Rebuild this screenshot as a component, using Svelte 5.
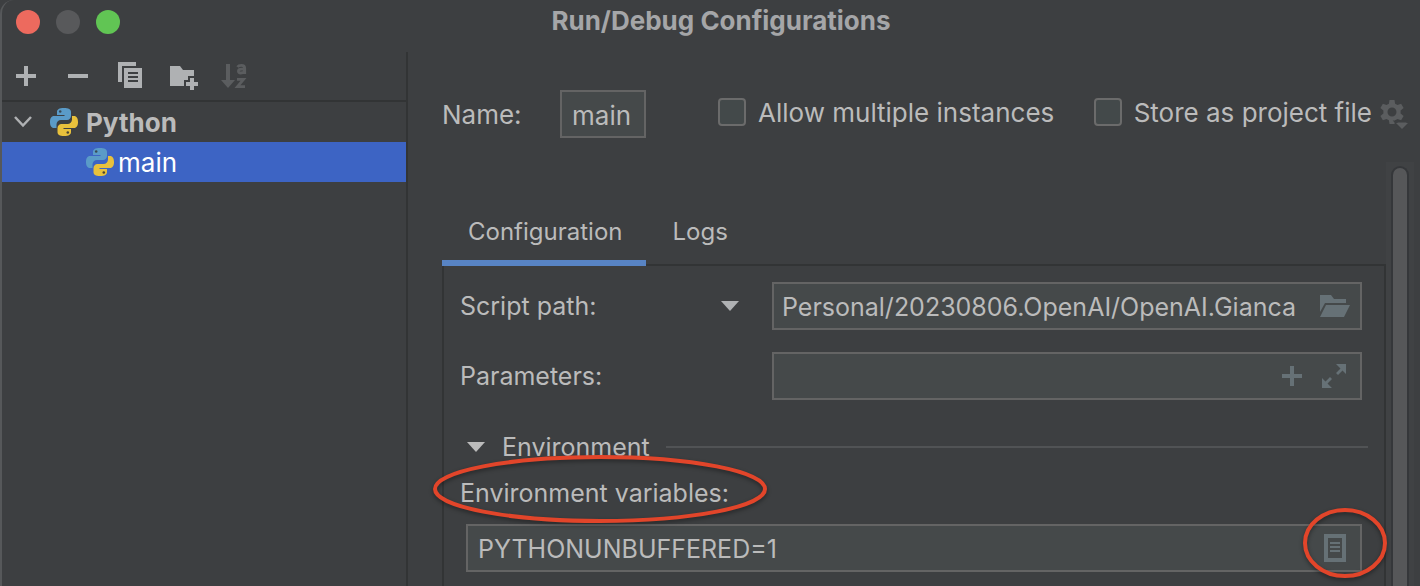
<script>
  let name = $state('main');
  let allowMultiple = $state(false);
  let storeAsFile = $state(false);
  let scriptPath = $state('Personal/20230806.OpenAI/OpenAI.Gianca');
  let parameters = $state('');
  let variables = $state('PYTHONUNBUFFERED=1');
</script>

{#snippet python()}
  <svg class="python" viewBox="0 0 28 28" width="28" height="28" aria-hidden="true">
    <path fill="#5a9bc8" d="M14 0C9 0 7 1.500 7 4v3h7.500v1H4C1.300 8 0 10.500 0 14s1.300 6 4 6h2.500v-3.500c0-2.500 2-4.500 4.500-4.500h6c2.200 0 4-1.800 4-4V4c0-2.700-2.500-4-7-4z" />
    <path fill="#e8c13c" d="M14 28c5 0 7-1.500 7-4v-3h-7.500v-1H24c2.700 0 4-2.500 4-6s-1.300-6-4-6h-2v3.500c0 2.500-2 4.500-4.500 4.500h-6c-2.200 0-4 1.800-4 4v4c0 2.700 2 4 6.500 4z" />
    <circle cx="10.200" cy="3.500" r="1.300" fill="#3a4a55" />
    <circle cx="17.800" cy="24.500" r="1.300" fill="#4a4635" />
  </svg>
{/snippet}

<div class="window">
  <header>
    <div class="lights">
      <button class="light close" aria-label="Close"></button>
      <button class="light" aria-label="Minimize" disabled></button>
      <button class="light zoom" aria-label="Zoom"></button>
    </div>
    <h1>Run/Debug Configurations</h1>
  </header>

  <div class="body">
    <aside>
      <div class="toolbar">
        <button aria-label="Add">
          <svg viewBox="0 0 28 28" width="28" height="28"><path d="M4 12h8V4h4v8h8v4h-8v8h-4v-8H4z" /></svg>
        </button>
        <button aria-label="Remove">
          <svg viewBox="0 0 28 28" width="28" height="28"><path d="M4 12h20v4H4z" /></svg>
        </button>
        <button aria-label="Copy">
          <svg viewBox="0 0 28 28" width="28" height="28">
            <path d="M2 0h18v4H6v16H2z" />
            <path fill-rule="evenodd" d="M8 6h18v20H8zM12 10v2h10v-2zM12 14v2h10v-2zM12 18v2h10v-2z" />
          </svg>
        </button>
        <button aria-label="New folder">
          <svg viewBox="0 0 28 28" width="28" height="28">
            <path d="M2 4h10l3 4h11v6h-6v4h-4v6H2z" />
            <path d="M22 16h4v4h4v4h-4v4h-4v-4h-4v-4h4z" />
          </svg>
        </button>
        <button aria-label="Sort alphabetically" disabled>
          <svg viewBox="0 0 28 28" width="28" height="28">
            <path d="M6 2h4v16h5l-7 8-7-8h5z" />
            <g fill="none" stroke="currentColor" stroke-width="2.800">
              <path d="M17.500 5c1-1.500 2.500-1.700 4-1.700 2 0 3.200.8 3.200 3V12M25 7.200h-3.500c-4 0-4 3.800-.8 3.800 2.300 0 4-1 4-3" />
              <path d="M17 17.400h6.500l-6 7.200h7.500" />
            </g>
          </svg>
        </button>
      </div>
      <ul class="tree">
        <li class="group">
          <svg class="chevron" viewBox="0 0 18 12" width="18" height="12" aria-hidden="true"><path d="M1 1l8 8.500L17 1" /></svg>
          {@render python()}
          <span>Python</span>
        </li>
        <li class="leaf selected">
          {@render python()}
          <span>main</span>
        </li>
      </ul>
    </aside>

    <main>
      <div class="name-row">
        <label class="name-label" for="name">Name:</label>
        <input class="field name" id="name" bind:value={name} />
        <label class="check multiple"><input type="checkbox" bind:checked={allowMultiple} /><span>Allow multiple instances</span></label>
        <label class="check"><input type="checkbox" bind:checked={storeAsFile} /><span>Store as project file</span></label>
        <button class="gear" aria-label="Storage options" disabled>
          <svg viewBox="0 0 28 30" width="28" height="30">
            <path fill-rule="evenodd" d="M9.500 1h5l.6 3.800 2.400 1.300 3.600-1.400 2.500 4.300-3 2.500v3l3 2.500-2.500 4.300-3.600-1.400-2.400 1.300-.6 3.800h-5l-.6-3.800-2.400-1.300-3.600 1.400L.4 17l3-2.500v-3L.4 9l2.500-4.300 3.600 1.400 2.400-1.300zM12 8.500a4.500 4.500 0 1 0 0 9 4.500 4.500 0 0 0 0-9z" />
            <path d="M15 22.500h14l-7 7.500z" stroke="#3d3f41" stroke-width="2" />
            <path d="M16 24h12l-6 6z" />
          </svg>
        </button>
      </div>

      <div class="scroll">
        <div class="content">
          <div class="tabs" role="tablist">
            <button role="tab" aria-selected="true">Configuration</button>
            <button role="tab" aria-selected="false">Logs</button>
          </div>
          <section class="panel">
            <div class="form-row">
              <label for="script">Script path:</label>
              <button class="drop" aria-label="Choose target type">
                <svg viewBox="0 0 18 10" width="18" height="10"><path d="M0 0h18l-9 10z" /></svg>
              </button>
              <div class="field">
                <input id="script" bind:value={scriptPath} />
                <button aria-label="Browse">
                  <svg viewBox="0 0 30 22" width="30" height="22">
                    <path d="M0 0h11l3 4h12v4H5L0 17z" />
                    <path d="M6 10h24l-6 12H0z" />
                  </svg>
                </button>
              </div>
            </div>
            <div class="form-row">
              <label for="params">Parameters:</label>
              <div class="field params">
                <input id="params" bind:value={parameters} />
                <button aria-label="Insert macro">
                  <svg viewBox="0 0 20 20" width="20" height="20"><path d="M0 8h8V0h4v8h8v4h-8v8H8v-8H0z" /></svg>
                </button>
                <button aria-label="Expand">
                  <svg viewBox="0 0 24 24" width="24" height="24">
                    <path d="M14 0h10v10l-3.500-3.500-4.500 4.500-2-2 4.500-4.500z" />
                    <path d="M10 24H0V14l3.500 3.500L8 13l2 2-4.500 4.500z" />
                  </svg>
                </button>
              </div>
            </div>

            <h2>
              <button class="fold" aria-expanded="true">
                <svg viewBox="0 0 18 10" width="18" height="10" aria-hidden="true"><path d="M0 0h18l-9 10z" /></svg>
                Environment
              </button>
            </h2>

            <div class="env-label">
              <label for="env">Environment variables:</label>
              <svg class="mark wide" viewBox="0 0 336 72" width="336" height="72" aria-hidden="true"><ellipse cx="168" cy="36" rx="165" ry="32" /></svg>
            </div>
            <div class="field env">
              <input id="env" bind:value={variables} />
              <span class="edit">
                <button aria-label="Edit environment variables">
                  <svg viewBox="0 0 22 28" width="22" height="28">
                    <path fill-rule="evenodd" d="M0 0h22v28H0zM4 4v20h14V4z" />
                    <path d="M6 8h10v2H6zM6 12h10v2H6zM6 16h10v2H6z" />
                  </svg>
                </button>
                <svg class="mark round" viewBox="0 0 90 74" width="90" height="74" aria-hidden="true"><ellipse cx="45" cy="37" rx="40" ry="33" /></svg>
              </span>
            </div>
          </section>
        </div>
        <div class="track"><div class="thumb"></div></div>
      </div>
    </main>
  </div>
</div>

<style>
  :global(body) {
    margin: 0;
    background: #3d3f41;
  }
  .window {
    box-sizing: border-box;
    min-height: 100vh;
    display: flex;
    flex-direction: column;
    overflow: hidden;
    border-left: 2px solid #56585a;
    border-top-left-radius: 14px;
    background: #3d3f41;
    color: #bbbbbb;
    font: 25px/32px Inter, "Liberation Sans", sans-serif;
  }
  button {
    padding: 0;
    border: 0;
    background: none;
    color: inherit;
    font: inherit;
  }
  svg {
    display: block;
    fill: currentColor;
    flex: none;
  }
  header {
    display: grid;
    grid-template-columns: 1fr auto 1fr;
    height: 52px;
    padding-left: 14px;
  }
  .lights {
    display: flex;
    gap: 16px;
    padding-top: 10px;
  }
  .light {
    width: 24px;
    height: 24px;
    border-radius: 50%;
    background: #58595b;
  }
  .close { background: #ed6a5e; }
  .zoom { background: #61c554; }
  h1 {
    margin: 0;
    padding: 5px 0 0 6px;
    color: #a5a6a8;
    font-size: 26px;
    font-weight: 700;
  }
  .body {
    flex: 1;
    display: grid;
    grid-template-columns: 406px minmax(0, 1fr);
  }
  aside { border-right: 2px solid #323435; }
  .toolbar {
    display: flex;
    align-items: center;
    gap: 24px;
    height: 48px;
    padding-left: 10px;
    border-bottom: 2px solid #323435;
    color: #afb1b3;
  }
  .toolbar svg { overflow: visible; }
  .toolbar button:disabled { color: #5b5d5f; }
  .tree {
    margin: 0;
    padding: 0;
    list-style: none;
    font-size: 26px;
  }
  .tree li {
    display: flex;
    align-items: center;
    height: 40px;
  }
  .tree span, .check span { padding-top: 2px; }
  .group {
    gap: 8px;
    padding-left: 12px;
    font-weight: 700;
  }
  .chevron {
    margin-right: 10px;
    fill: none;
    stroke: #afb1b3;
    stroke-width: 2.500;
  }
  .leaf {
    gap: 4px;
    padding-left: 84px;
  }
  .selected {
    background: #3d64c4;
    color: #ffffff;
  }
  main {
    display: flex;
    flex-direction: column;
    padding-left: 34px;
  }
  .name-row {
    display: flex;
    align-items: center;
    padding: 38px 12px 24px 0;
    font-size: 26px;
  }
  .name-label {
    width: 118px;
    padding-top: 2px;
  }
  input {
    box-sizing: border-box;
    min-width: 0;
    color: inherit;
    font: inherit;
    outline: 0;
  }
  .field {
    box-sizing: border-box;
    display: flex;
    align-items: center;
    height: 48px;
    border: 2px solid #646464;
    background: #45494a;
  }
  .field > input {
    flex: 1;
    padding: 2px 0 0 8px;
    border: 0;
    background: none;
  }
  .field button { color: #667176; }
  .name {
    width: 86px;
    padding: 2px 10px 0;
  }
  .check {
    display: flex;
    align-items: center;
    gap: 12px;
    margin-bottom: 4px;
    white-space: nowrap;
  }
  .multiple { margin: 0 auto 4px 72px; }
  .check input {
    appearance: none;
    width: 28px;
    height: 28px;
    margin: 0;
    border: 2px solid #6b6b6b;
    border-radius: 4px;
    background: #43494a;
  }
  .gear {
    margin-left: 8px;
    color: #5b5d5f;
  }
  .scroll {
    flex: 1;
    display: flex;
  }
  .content {
    flex: 1;
    min-width: 0;
    display: flex;
    flex-direction: column;
    padding-top: 42px;
  }
  .tabs {
    display: flex;
    box-shadow: inset 0 -2px #323435;
    font-size: 24px;
  }
  .tabs button {
    height: 62px;
    padding: 0 24px 0 26px;
    border-bottom: 6px solid transparent;
  }
  .tabs button[aria-selected='true'] { border-color: #5884c4; }
  .panel {
    flex: 1;
    padding: 16px 22px 14px 16px;
    border: solid #323435;
    border-width: 0 2px;
  }
  .form-row {
    display: flex;
    align-items: center;
    margin-bottom: 22px;
  }
  .form-row label { width: 261px; }
  .form-row .field {
    flex: 1;
    padding-right: 10px;
  }
  .drop {
    margin-right: 33px;
    color: #afb1b3;
  }
  .form-row label:has(+ .params) { width: 312px; }
  .params { gap: 20px; }
  .params button:last-child { margin-right: 4px; }
  h2 {
    display: flex;
    align-items: center;
    gap: 16px;
    margin: 31px -6px 14px 7px;
    font-size: inherit;
    font-weight: 400;
  }
  h2::after {
    content: '';
    flex: 1;
    height: 2px;
    background: #515355;
  }
  .fold {
    display: flex;
    align-items: center;
    gap: 17px;
  }
  .env-label {
    position: relative;
    width: fit-content;
  }
  .env {
    margin: 15px 0 0 6px;
    padding-right: 14px;
  }
  .env > input { padding-left: 10px; }
  .edit { position: relative; }
  .mark {
    position: absolute;
    z-index: 1;
    fill: none;
    stroke: #e2452a;
    stroke-width: 4;
    pointer-events: none;
    overflow: visible;
    filter: drop-shadow(0 2px 2px #00000066);
  }
  .wide {
    top: -24px;
    left: -28px;
  }
  .round {
    top: -28px;
    left: -24px;
  }
  .edit button { display: block; }
  .track {
    box-sizing: border-box;
    width: 28px;
    margin-right: 6px;
    padding: 4px 5px 0;
    display: flex;
    background: #404244;
  }
  .thumb {
    box-sizing: border-box;
    flex: 1;
    border: 2px solid #35373a;
    border-bottom: 0;
    border-radius: 9px 9px 0 0;
    background: #565759;
  }
</style>
